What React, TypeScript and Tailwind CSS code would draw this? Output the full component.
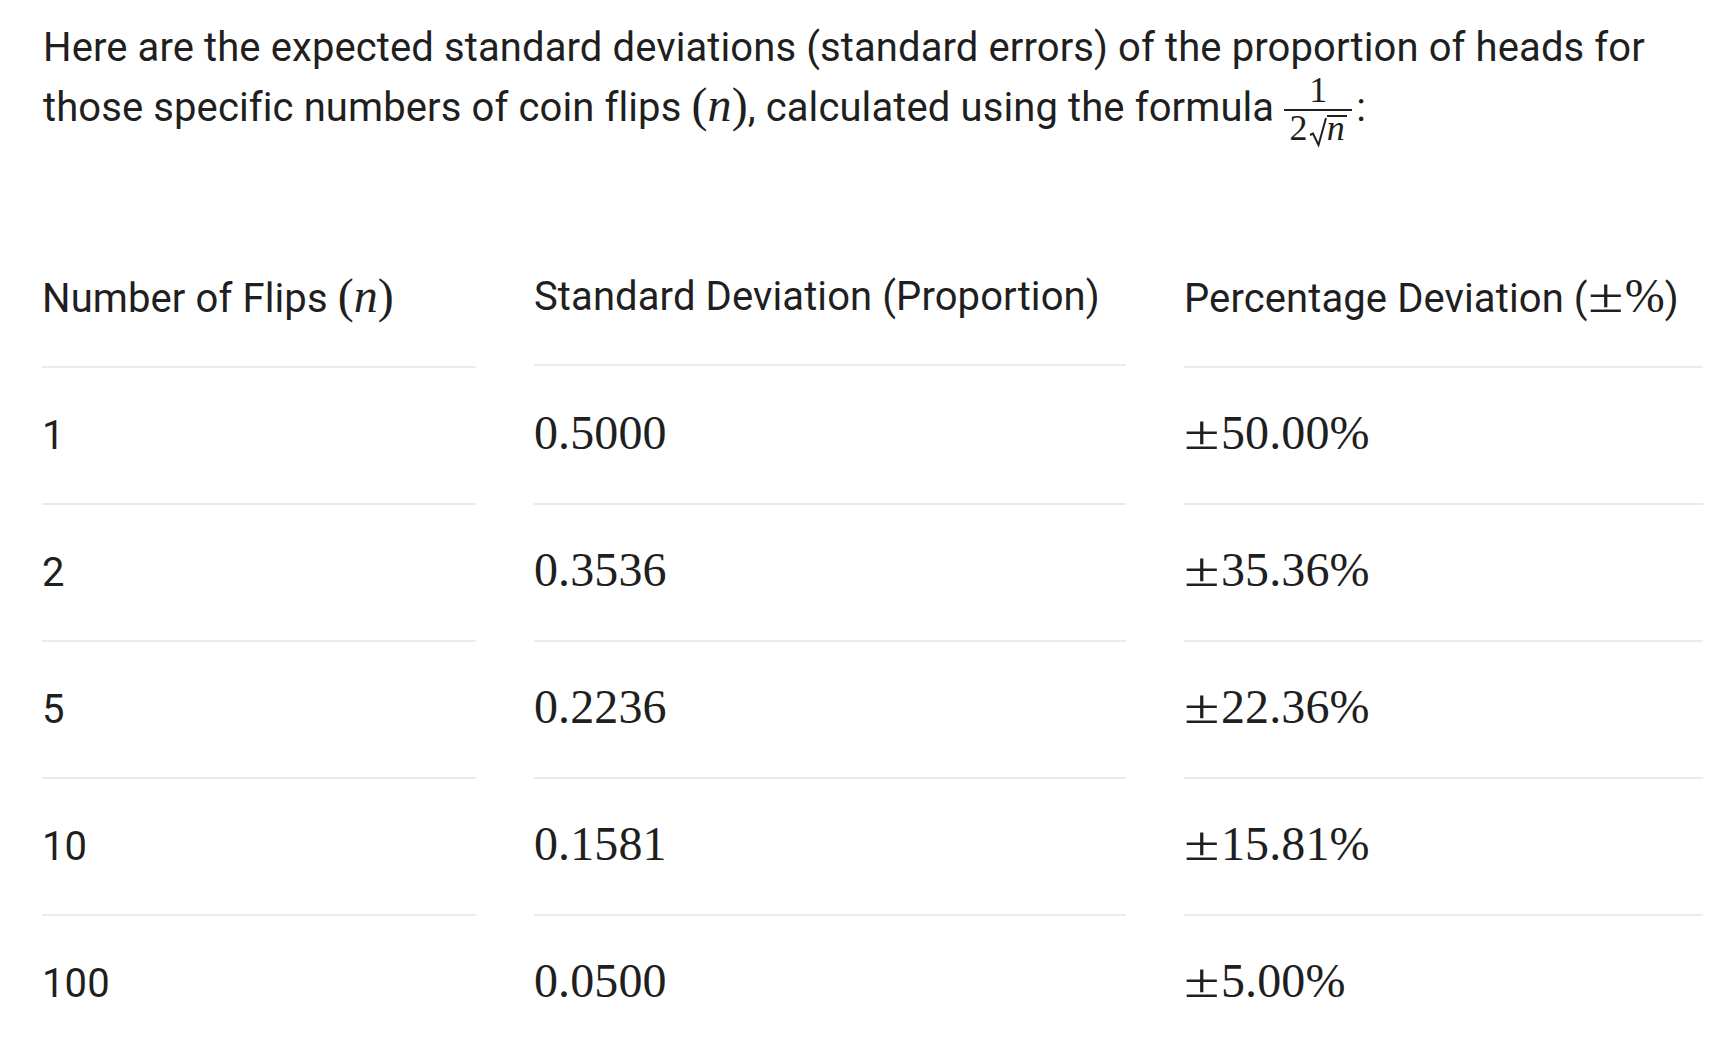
const rows = [
  { n: '1', sd: '0.5000', pct: '50.00%' },
  { n: '2', sd: '0.3536', pct: '35.36%' },
  { n: '5', sd: '0.2236', pct: '22.36%' },
  { n: '10', sd: '0.1581', pct: '15.81%' },
  { n: '100', sd: '0.0500', pct: '5.00%' },
];

function M({ children }: { children: React.ReactNode }) {
  return <span className="font-['Liberation_Serif',serif] text-[48px] leading-none">{children}</span>;
}

// the math ± is wider than the Times one
function Pm() {
  return <span className="inline-block w-[37px] origin-left scale-x-[1.35]">±</span>;
}

function VarN() {
  return (
    <M>
      (<span className="italic">n</span>)
    </M>
  );
}

function Fraction() {
  return (
    <span className="inline-flex flex-col items-center align-[19px] -my-[30px] font-['Liberation_Serif',serif] text-[36px] ml-[10px] mr-[4px]">
      <span className="leading-[24px] pb-[7px]">1</span>
      <span className="w-[68px] h-[2px] bg-[#1f1f1f]" />
      <span className="leading-[24px] pt-[4px] whitespace-nowrap">
        2
        <svg width="18" height="31" viewBox="0 0 18 31" className="inline-block align-[-8px] ml-[1px]">
          <path d="M1 18 L4 16.5 L9.5 28 L17 1" fill="none" stroke="#1f1f1f" strokeWidth="2" strokeLinejoin="miter" />
        </svg>
        <span className="inline-block italic border-t-[2px] border-[#1f1f1f] leading-[22px] pr-[2px]">n</span>
      </span>
    </span>
  );
}

const cell = 'border-b-[2.5px] border-[#ebebeb] py-[37.5px] leading-[60px] whitespace-nowrap';

export default function App() {
  return (
    <div className="min-h-screen bg-white text-[#1f1f1f] font-['Roboto',sans-serif] text-[40px] leading-[60px] tracking-[0.1px] pl-[43px] pr-[24px] pt-[18px]">
      <p className="h-[120px]">
        Here are the expected standard deviations (standard errors) of the proportion of heads for
        <br />
        those specific numbers of coin flips <VarN />, calculated using the formula<Fraction />:
      </p>

      <div className="mt-[93px] grid grid-cols-[434px_592px_519px] gap-x-[58px] -ml-[1px]">
        <div className={cell}>
          Number of Flips <VarN />
        </div>
        <div className={`${cell} -translate-y-[2px]`}>Standard Deviation (Proportion)</div>
        <div className={cell}>
          Percentage Deviation (
          <M>
            <Pm />%
          </M>
          )
        </div>

        {rows.map((r, i) => {
          const last = i === rows.length - 1 ? 'border-b-0' : '';
          return (
            <div key={r.n} className="contents">
              <div className={`${cell} ${last}`}>{r.n}</div>
              <div className={`${cell} ${last}`}>
                <M>{r.sd}</M>
              </div>
              <div className={`${cell} ${last}`}>
                <M>
                  <Pm />
                  {r.pct}
                </M>
              </div>
            </div>
          );
        })}
      </div>
    </div>
  );
}
